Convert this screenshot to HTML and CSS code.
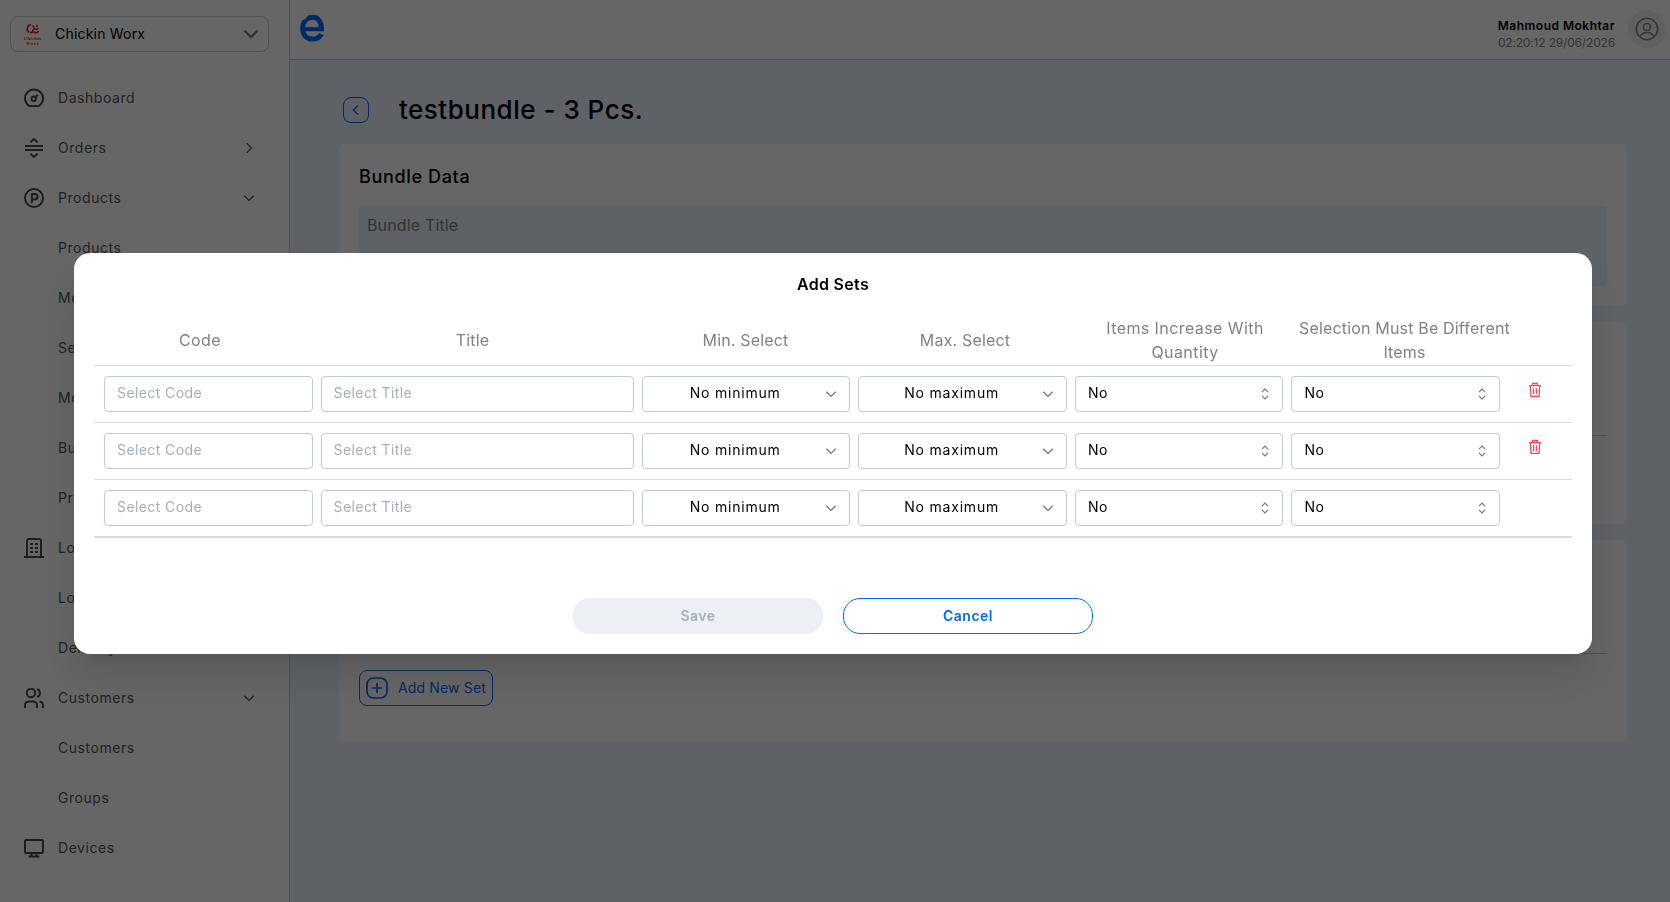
FILE: index.html
```
<!DOCTYPE html>
<html lang="en">
<head>
<meta charset="utf-8">
<title>Add Sets</title>
<link rel="stylesheet" href="styles.css">
</head>
<body>
<svg class="defs" width="0" height="0">
  <symbol id="down" viewBox="0 0 12 12"><path d="M1.300 3.800 6 8.400l4.700-4.600"/></symbol>
  <symbol id="updown" viewBox="0 0 8 12"><path d="M1 4.200 4 1.200l3 3M1 7.800l3 3 3-3"/></symbol>
  <symbol id="trash" viewBox="0 0 14 16"><path d="M1 3.700h12M4.500 3.500V1.500h5v2M2.300 4l.7 10.400h8L11.700 4M5.600 6.300v6M8.400 6.300v6"/></symbol>
</svg>
<div class="app">
  <aside class="sidebar">
    <div class="store">
      <svg class="brand" viewBox="0 0 18 22"><path d="M6.500 2C2.500 2.500 2.500 8 5 9.200M4 2.500l3-1M6 9.500c2 .5 3-1 2.500-2.500M9 8.500c2 2 5 1.500 5.500-.5M9 7c1.500-2 3-1 4-.5M10 4.500 8.800 2.500M12.500 4l1-2M14.500 5.500l-1.500.5"/><text x="0" y="16.800" textLength="17">Chickin</text><text x="2" y="21.500" textLength="13">Worx</text></svg>
      <span class="store-name">Chickin Worx</span>
      <svg class="store-arrow" viewBox="0 0 16 10"><path d="M1.500 1.500 8 8.300l6.500-6.800"/></svg>
    </div>
    <nav class="nav">
      <a class="item"><svg viewBox="0 0 20 20"><path d="M5.200 18A9 9 0 1 1 14.800 18Z"/><circle cx="9.800" cy="10.800" r="2.200"/><path d="m11.400 9.200 2.400-2.400"/></svg><span>Dashboard</span></a>
      <a class="item"><svg viewBox="0 0 20 20"><path d="M1 8h18M1 12h18M6.500 4.200 10 1l3.500 3.200M6.500 15.800 10 19l3.500-3.200"/></svg><span>Orders</span><svg class="chev right"><use href="#down"/></svg></a>
      <a class="item"><svg viewBox="0 0 20 20"><circle cx="10" cy="10" r="9"/><path d="M7.900 15V6h2.800a2.800 2.800 0 0 1 0 5.600H8"/></svg><span>Products</span><svg class="chev"><use href="#down"/></svg></a>
      <a class="item sub"><span>Products</span></a>
      <a class="item sub"><span>Menus</span></a>
      <a class="item sub"><span>Sets</span></a>
      <a class="item sub"><span>Mods</span></a>
      <a class="item sub"><span>Bundles</span></a>
      <a class="item sub"><span>Prices</span></a>
      <a class="item"><svg viewBox="0 0 20 20"><path d="M0 19h20M3 19V3q0-2 2-2h10q2 0 2 2v16"/><path d="M6 6h3M11 6h3M6 10h3M11 10h3M6 14h3M11 14h3"/></svg><span>Locations</span></a>
      <a class="item sub"><span>Locations</span></a>
      <a class="item sub"><span>Delivery</span></a>
      <a class="item"><svg viewBox="0 0 20 20"><circle cx="7" cy="5" r="4.200"/><path d="M1 20v-2.500Q1 13.500 5 13.500h4q4 0 4 4V20M13 1a4.200 4.200 0 0 1 0 8M15.500 13.500Q19 14 19 17.500V20"/></svg><span>Customers</span><svg class="chev"><use href="#down"/></svg></a>
      <a class="item sub"><span>Customers</span></a>
      <a class="item sub"><span>Groups</span></a>
      <a class="item"><svg viewBox="0 0 20 20"><rect x="1" y="2" width="18" height="13" rx="1"/><path d="M4.500 18.500h11M7.500 15v3M12.500 15v3"/></svg><span>Devices</span></a>
    </nav>
  </aside>
  <div class="page">
    <header class="topbar">
      <svg class="logo" viewBox="0 0 24 28"><path class="bar" d="M4 15.200h19.500"/><path d="M21.400 17C22 7.500 18 3.300 12.600 3.300 6.500 3.300 2.700 8 2.700 14.500c0 6.500 4 10.600 9.900 10.600 4 0 7-1.600 8.800-5"/><path class="cut" d="M-1 0H8Q7.500 5.500 1.500 6.500H-1Z"/></svg>
      <div class="user">
        <div class="user-text"><b>Mahmoud Mokhtar</b><time>02:20:12 29/06/2026</time></div>
        <div class="avatar"><svg viewBox="0 0 24 24"><circle cx="12" cy="12" r="10.700"/><circle cx="12" cy="10" r="3.600"/><path d="M5 19.500q2-4 7-4t7 4"/></svg></div>
      </div>
    </header>
    <main class="content">
      <div class="heading"><button class="back"><svg viewBox="0 0 12 12"><path d="M8 1.500 3.500 6 8 10.500"/></svg></button><h1>testbundle - 3 Pcs.</h1></div>
      <section class="card data"><h2>Bundle Data</h2><div class="field">Bundle Title</div></section>
      <section class="card second"><hr></section>
      <section class="card third"><hr>
        <button class="add"><svg viewBox="0 0 22 22"><rect x="1" y="1" width="20" height="20" rx="6.500"/><path d="M11 6v10M6 11h10"/></svg><span>Add New Set</span></button>
      </section>
    </main>
  </div>
</div>
<div class="overlay">
  <div class="modal" role="dialog">
    <h3>Add Sets</h3>
    <div class="thead"><span class="wide">Code</span><span>Title</span><span>Min. Select</span><span>Max. Select</span><span class="wide">Items Increase With<br>Quantity</span><span>Selection Must Be Different<br>Items</span></div>
    <div class="row">
      <div class="box ph">Select Code</div><div class="box ph">Select Title</div>
      <div class="box sel"><span>No minimum</span><svg><use href="#down"/></svg></div><div class="box sel"><span>No maximum</span><svg><use href="#down"/></svg></div>
      <div class="box opt"><span>No</span><svg><use href="#updown"/></svg></div><div class="box opt"><span>No</span><svg><use href="#updown"/></svg></div>
      <svg class="trash"><use href="#trash"/></svg>
    </div>
    <div class="row">
      <div class="box ph">Select Code</div><div class="box ph">Select Title</div>
      <div class="box sel"><span>No minimum</span><svg><use href="#down"/></svg></div><div class="box sel"><span>No maximum</span><svg><use href="#down"/></svg></div>
      <div class="box opt"><span>No</span><svg><use href="#updown"/></svg></div><div class="box opt"><span>No</span><svg><use href="#updown"/></svg></div>
      <svg class="trash"><use href="#trash"/></svg>
    </div>
    <div class="row last">
      <div class="box ph">Select Code</div><div class="box ph">Select Title</div>
      <div class="box sel"><span>No minimum</span><svg><use href="#down"/></svg></div><div class="box sel"><span>No maximum</span><svg><use href="#down"/></svg></div>
      <div class="box opt"><span>No</span><svg><use href="#updown"/></svg></div><div class="box opt"><span>No</span><svg><use href="#updown"/></svg></div>
    </div>
    <div class="actions"><button class="save">Save</button><button class="cancel">Cancel</button></div>
  </div>
</div>
</body>
</html>
```
FILE: styles.css
```
* { box-sizing: border-box; }
body { margin: 0; overflow: hidden; font: 14px/20px Inter, "Open Sans", sans-serif; letter-spacing: .4px; color: #000; }
h1, h2, h3, hr { margin: 0; }
button { font: inherit; letter-spacing: inherit; background: none; padding: 0; }
svg { fill: none; stroke: currentColor; flex: none; }
.defs { position: absolute; }
.app { display: flex; width: 1670px; height: 902px; background: #ebf3ff; }

.sidebar { width: 290px; border-right: 1px solid #bfc9d2; background: #fff; padding: 16px 20px 0 10px; overflow: hidden; flex: none; }
.store { height: 36px; border: 1px solid #bfcad3; border-radius: 8px; display: flex; align-items: center; padding: 0 9px 0 13px; }
.brand { width: 18px; height: 22px; color: #e52535; stroke-width: 1.700; }
.brand text { font: italic bold 5px "Liberation Serif", serif; letter-spacing: 0; fill: currentColor; stroke: none; }
.store-name { margin-left: 13px; flex: 1; letter-spacing: .2px; }
.store-arrow { width: 16px; height: 10px; stroke-width: 2; color: #6c7a84; }
.nav { padding: 21px 14px 0 14px; letter-spacing: .55px; }
.item { height: 50px; display: flex; align-items: center; color: #555; }
.item > svg:first-child { width: 20px; height: 20px; stroke-width: 2; margin-right: 14px; color: #4a4a4a; }
.item.sub { padding-left: 34px; }
.item .chev { width: 12px; height: 12px; margin-left: auto; stroke-width: 1.300; }
.item .right { transform: rotate(-90deg); }

.page { flex: 1; }
.topbar { height: 60px; background: #fff; border-bottom: 1px solid #bfcad3; display: flex; align-items: flex-start; justify-content: space-between; padding: 10px 4px 0 10px; }
.logo { width: 24px; height: 28px; margin-top: 4px; color: #006aff; stroke-width: 5; }
.logo .bar { stroke-width: 4; }
.logo .cut { fill: #fff; stroke: none; }
.user { display: flex; gap: 13px; }
.user-text { padding-top: 7px; font-size: 12px; line-height: 17px; display: flex; flex-direction: column; text-align: right; }
.user-text b { font-weight: 600; letter-spacing: .5px; }
.user-text time { color: #7d8790; letter-spacing: -.17px; }
.avatar { width: 38px; height: 38px; border-radius: 50%; background: #ecf0f3; display: grid; place-items: center; color: #7d8790; }
.avatar svg { width: 24px; height: 24px; stroke-width: 1.500; }

.content { padding: 30px 43px 0 49px; }
.heading { display: flex; align-items: center; gap: 30px; height: 40px; padding-left: 4px; margin-bottom: 14px; }
.back { width: 26px; height: 26px; border: 1px solid #006aff; border-radius: 8px; color: #006aff; display: grid; place-items: center; }
.back svg { width: 12px; height: 12px; stroke-width: 1.300; }
h1 { font-size: 26px; line-height: 40px; font-weight: 500; letter-spacing: .5px; }
.card { background: #fff; border-radius: 6px; padding: 20px; margin-bottom: 16px; }
.data { height: 162px; }
h2 { font-size: 18px; line-height: 26px; font-weight: 500; letter-spacing: .65px; margin-bottom: 16px; }
.field { height: 80px; border-radius: 4px; background: #ebf3ff; padding: 7px 8px; font-size: 16px; line-height: 24px; color: #828282; letter-spacing: .15px; }
.second { height: 202px; padding-top: 113px; }
.third { height: 202px; padding-top: 113px; }
hr { border: 0; border-top: 1px solid #bfcad3; }
.add { margin-top: 16px; width: 134px; height: 36px; border: 1px solid #006aff; border-radius: 8px; color: #006aff; display: flex; align-items: center; gap: 10px; padding-left: 6px; letter-spacing: .15px; white-space: nowrap; }
.add svg { width: 22px; height: 22px; stroke-width: 1.700; }

.overlay { position: fixed; inset: 0; background: rgba(0, 0, 0, .6); padding: 253px 78px 0 74px; }
.modal { height: 401px; border-radius: 16px; background: #fff; padding: 19px 20px 20px; box-shadow: 0 11px 15px -7px rgba(0,0,0,.1), 0 24px 38px 3px rgba(0,0,0,.1); }
h3 { font-size: 16px; line-height: 24px; font-weight: 600; text-align: center; letter-spacing: .3px; margin-bottom: 20px; }
.thead { display: grid; grid-template-columns: 212px 333px 213px 226px 214px 225px; height: 50px; padding-bottom: 4px; align-items: center; text-align: center; border-bottom: 1px solid #d8dfe4; font-size: 16px; line-height: 24px; color: #828282; letter-spacing: .17px; }
.thead .wide { letter-spacing: .42px; }
.row { display: grid; grid-template-columns: 208.500px 313.300px repeat(4, 208.400px) 72px; column-gap: 8.100px; height: 57px; padding: 10px 0 10px 10px; border-bottom: 1px solid #d8dfe4; }
.last { height: 58px; border-bottom-width: 2px; }
.box { height: 36px; border: 1px solid #c1cad2; border-radius: 4px; display: flex; align-items: center; padding: 0 12px 2px; }
.box svg { margin-top: 2px; }
.ph { color: #a3b0bb; letter-spacing: .4px; }
.sel span { flex: 1; text-align: center; padding-right: 10px; letter-spacing: .8px; }
.sel svg { width: 12px; height: 12px; color: #6c7a84; stroke-width: 1.300; }
.opt { justify-content: space-between; }
.opt svg { width: 8px; height: 12px; margin-right: 1px; color: #6c7a84; stroke-width: 1.200; }
.trash { width: 14px; height: 16px; margin: 6px 0 0 20px; color: #fa4653; stroke-width: 1.300; }
.actions { display: flex; justify-content: center; gap: 20px; margin-top: 60px; }
.actions button { width: 250px; height: 36px; border-radius: 17px; border: 0; font-weight: 600; letter-spacing: .5px; }
.save { background: #ecf0f3; color: #a3b0bb; }
.actions .cancel { border: 1px solid #006aff; color: #006aff; }
```
